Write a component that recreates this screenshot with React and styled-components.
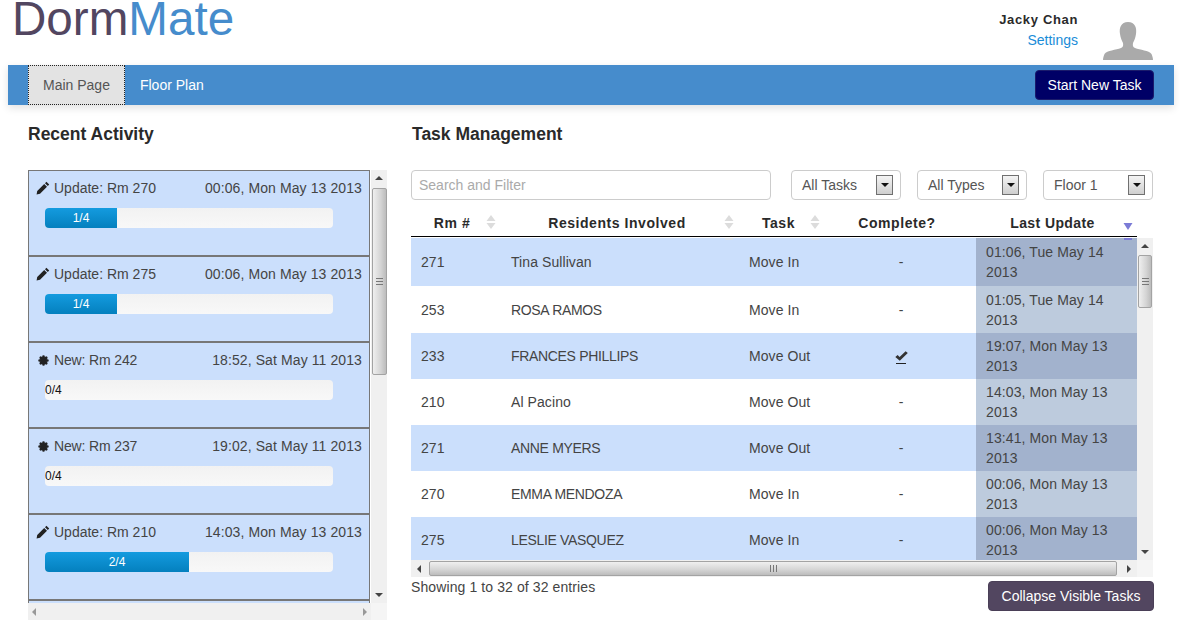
import React from "react";
import styled, { createGlobalStyle } from "styled-components";

const Global = createGlobalStyle`
  html, body { margin: 0; padding: 0; background: #fff; }
  body { font-family: "Liberation Sans", Arial, sans-serif; font-size: 14px; color: #333; }
  * { box-sizing: border-box; }
`;

const Page = styled.div`
  width: 1180px;
  height: 629px;
  overflow: hidden;
`;

const Header = styled.header`
  height: 65px;
  padding: 0 27px 0 12px;
  display: flex;
  justify-content: space-between;
`;

const Logo = styled.h1`
  margin: 0;
  font-size: 47.6px;
  line-height: 38px;
  font-weight: 400;
  color: #524660;
  height: 38px;
`;

const LogoAccent = styled.span`
  color: #468ccc;
`;

const User = styled.div`
  display: flex;
  gap: 25px;
`;

const UserText = styled.div`
  display: flex;
  flex-direction: column;
  align-items: flex-end;
  padding-top: 10px;
  line-height: 20px;
`;

const UserName = styled.strong`
  font-size: 13px;
  letter-spacing: 0.65px;
  color: #2a2a2a;
`;

const SettingsLink = styled.a`
  color: #1a8cd8;
`;

const Avatar = styled.svg`
  width: 50px;
  height: 38px;
  margin-top: 22px;
`;

const Nav = styled.nav`
  width: 1166px;
  height: 40px;
  margin-left: 8px;
  padding: 0 20px;
  display: flex;
  align-items: center;
  background: #468ccc;
  box-shadow: 0 3px 8px rgba(0, 0, 0, 0.12);
`;

const Tab = styled.a`
  height: 40px;
  padding: 0 15px;
  display: flex;
  align-items: center;
  color: ${(p) => (p.$active ? "#555" : "#fff")};
  background: ${(p) => (p.$active ? "#e3e3e3" : "transparent")};
  outline: ${(p) => (p.$active ? "1px dotted #222" : "none")};
  outline-offset: -1px;
`;

const PrimaryButton = styled.button`
  margin-left: auto;
  width: 119px;
  height: 30px;
  padding: 0;
  border: 1px solid #1b1b6b;
  border-radius: 4px;
  background: #000066;
  color: #fff;
  font: 14px "Liberation Sans", Arial, sans-serif;
`;

const Main = styled.main`
  padding: 0 26px 0 28px;
  display: grid;
  grid-template-columns: 359px 742px;
  column-gap: 25px;
`;

const Heading = styled.h2`
  margin: 0;
  height: 65px;
  padding-top: 19px;
  font-size: 17.5px;
  line-height: 20px;
  font-weight: 700;
  color: #2a2a2a;
`;

const LeftFrame = styled.div`
  display: grid;
  grid-template-columns: 343px 16px;
  grid-template-rows: 433px 17px;
  width: 359px;
  background: #f0f0f0;
`;

const ActivityList = styled.div`
  height: 433px;
  overflow: hidden;
  background: #fff;
`;

const ActivityCard = styled.div`
  width: 342px;
  height: 86px;
  border: 1px solid #777;
  background: #cbdffc;
  padding: 7px 7px 0 7px;
`;

const ActivityTop = styled.div`
  display: flex;
  justify-content: space-between;
  line-height: 20px;
  color: #444;
`;

const ActivityLabel = styled.span`
  display: flex;
  align-items: center;
  gap: 4px;
  letter-spacing: ${(p) => (p.$tight ? "-0.15px" : "0")};
`;

const ActivityTime = styled.span`
  letter-spacing: 0.1px;
`;

const Progress = styled.div`
  position: relative;
  width: 288px;
  height: 20px;
  margin: 10px 0 0 9px;
  background: linear-gradient(#f2f2f2, #f8f8f8);
  border-radius: 4px;
  overflow: hidden;
  font-size: 12px;
  line-height: 20px;
`;

const ProgressFill = styled.div`
  height: 100%;
  background: linear-gradient(#149bdf, #0480be);
  color: #fff;
  text-align: center;
`;

const ProgressEmpty = styled.span`
  color: #111;
`;

const VTrack = styled.div`
  display: flex;
  flex-direction: column;
  align-items: center;
  background: #f0f0f0;
  height: ${(p) => p.$h}px;
`;

const VThumb = styled.div`
  width: ${(p) => p.$w}px;
  height: ${(p) => p.$h}px;
  flex: none;
  margin-top: ${(p) => p.$top}px;
  border: 1px solid #a3a3a3;
  border-radius: 2px;
  background: linear-gradient(90deg, #efefef, #d4d4d4 60%, #bcbcbc);
  display: flex;
  align-items: center;
  justify-content: center;
`;

const Grip = styled.div`
  width: 7px;
  height: 7px;
  background: repeating-linear-gradient(#777 0 1px, transparent 1px 3px);
`;

const GripH = styled(Grip)`
  background: repeating-linear-gradient(90deg, #777 0 1px, transparent 1px 3px);
`;

const ArrowBtn = styled.div`
  flex: none;
  width: 0;
  height: 0;
  border-style: solid;
  border-color: transparent;
  border-width: ${(p) =>
    p.$d === "up"
      ? "0 4px 4px"
      : p.$d === "down"
        ? "4px 4px 0"
        : p.$d === "left"
          ? "4px 4px 4px 0"
          : "4px 0 4px 4px"};
  ${(p) => p.$d === "up" && "border-bottom-color: #444;"}
  ${(p) => p.$d === "down" && "border-top-color: #444;"}
  ${(p) => p.$d === "right" && `border-left-color: ${p.$soft ? "#999" : "#444"};`}
  ${(p) => p.$d === "left" && `border-right-color: ${p.$soft ? "#999" : "#444"};`}
`;

const Spacer = styled.div`
  flex: 1;
`;

const HTrack = styled.div`
  display: flex;
  align-items: center;
  height: 17px;
  padding: 0 ${(p) => p.$pad || 4}px;
  background: #f0f0f0;
`;

const HThumb = styled.div`
  flex: none;
  height: 15px;
  width: ${(p) => p.$w}px;
  margin-left: ${(p) => p.$left}px;
  border: 1px solid #a3a3a3;
  border-radius: 2px;
  background: linear-gradient(#efefef, #d4d4d4 60%, #bcbcbc);
  display: flex;
  align-items: center;
  justify-content: center;
`;

const Corner = styled.div`
  background: #f5f5f5;
`;

const Toolbar = styled.div`
  display: flex;
  gap: 16px;
  height: 30px;
  margin-left: -1px;
  width: 742px;
`;

const SearchInput = styled.input`
  width: 360px;
  height: 30px;
  margin-right: 4px;
  padding: 0 7px;
  border: 1px solid #ccc;
  border-radius: 4px;
  font: 14px "Liberation Sans", Arial, sans-serif;
  outline: none;
  &::placeholder { color: #aaa; opacity: 1; }
`;

const FakeSelect = styled.div`
  width: 110px;
  height: 30px;
  display: flex;
  align-items: center;
  justify-content: space-between;
  padding: 0 7px 0 10px;
  border: 1px solid #ccc;
  border-radius: 4px;
  color: #555;
`;

const SelectArrow = styled.span`
  width: 17px;
  height: 20px;
  display: flex;
  align-items: center;
  justify-content: center;
  border: 1px solid #707070;
  background: linear-gradient(#f4f4f4, #cfcfcf);
`;

const Caret = styled.span`
  width: 0;
  height: 0;
  border-style: solid;
  border-width: 4px 4px 0;
  border-color: #111 transparent transparent;
`;

const TableWrap = styled.div`
  margin-left: -1px;
  width: 742px;
`;

const columns = "90px 238px 101px 136px 161px";

const HeadRow = styled.div`
  display: grid;
  grid-template-columns: ${columns};
  width: 726px;
  height: 28px;
  margin-top: 9px;
  border-bottom: 1px solid #000;
`;

const HeadCell = styled.div`
  position: relative;
  text-align: center;
  font-weight: 700;
  font-size: 14px;
  letter-spacing: ${(p) => p.$spacing ?? 0.55}px;
  line-height: 28px;
  color: #2a2a2a;
  padding-right: ${(p) => p.$pr || 0}px;
`;

const SortIcon = styled.svg`
  position: absolute;
  right: ${(p) => p.$right}px;
  top: ${(p) => p.$top}px;
  width: 10px;
  height: 16px;
`;

const SortStub = styled.span`
  position: absolute;
  right: ${(p) => p.$right}px;
  bottom: -3px;
  width: 8px;
  height: 2px;
  background: ${(p) => p.$color};
`;

const TableBody = styled.div`
  display: grid;
  grid-template-columns: 726px 16px;
  grid-template-rows: 322px 17px;
  margin-top: 1px;
`;

const Rows = styled.div`
  height: 322px;
  overflow: hidden;
`;

const Row = styled.div`
  display: grid;
  grid-template-columns: ${columns};
  height: ${(p) => p.$h}px;
  background: ${(p) => (p.$odd ? "#cbdffc" : "#fff")};
  color: #444;
`;

const Cell = styled.div`
  display: flex;
  align-items: center;
  padding: 0 10px;
  letter-spacing: ${(p) => (p.$caps ? "-0.33px" : "0.08px")};
`;

const CompleteCell = styled(Cell)`
  justify-content: center;
  padding: 0 24px 0 10px;
`;

const DateCell = styled.div`
  display: flex;
  align-items: center;
  padding: 0 10px;
  line-height: 20px;
  letter-spacing: 0.1px;
  background: ${(p) => (p.$odd ? "#a2b2cd" : "#bdcbdd")};
`;

const CheckMark = styled.span`
  display: inline-flex;
  flex-direction: column;
  align-items: center;
  gap: 2px;
  padding-top: 2px;
  &::after {
    content: "";
    width: 10px;
    height: 1px;
    background: #222;
  }
`;

const Footer = styled.div`
  display: flex;
  justify-content: space-between;
  width: 743px;
`;

const FooterText = styled.div`
  line-height: 20px;
  color: #444;
  letter-spacing: 0.1px;
`;

const DarkButton = styled.button`
  width: 166px;
  height: 30px;
  margin-top: 4px;
  padding: 0;
  border: 1px solid #4a3f57;
  border-radius: 4px;
  background: #524660;
  color: #fff;
  font: 14px "Liberation Sans", Arial, sans-serif;
`;

const StarSvg = styled.svg`
  width: 11px;
  height: 11px;
  margin: 0 1px 0 2px;
`;

const Pencil = () => (
  <svg width="14" height="14" viewBox="0 0 14 14">
    <path d="M10.4 0.8 L13.2 3.6 L11.8 5 L9 2.2 Z M8.2 3 L11 5.8 L4 12.8 L0.6 13.4 L1.2 10 Z" fill="#222" />
  </svg>
);

const Star = () => (
  <StarSvg viewBox="0 0 14 14">
    <g stroke="#222" strokeWidth="3.4" strokeLinecap="round">
      <path d="M7 2 V12 M2 7 H12 M3.5 3.5 L10.5 10.5 M10.5 3.5 L3.5 10.5" />
    </g>
  </StarSvg>
);

const Check = () => (
  <svg width="13" height="10" viewBox="0 0 13 10">
    <path d="M0.3 6 L2.6 4 L4.6 6 L10.6 0.3 L12.8 2 L4.8 9.8 Z" fill="#333" />
  </svg>
);

const SortBoth = ({ right }) => (
  <>
    <SortIcon $right={right} $top={5} viewBox="0 0 10 16">
      <path d="M5 1 L9.5 7 H0.5 Z M5 15 L9.5 9 H0.5 Z" fill="#dcdcdc" />
    </SortIcon>
    <SortStub $right={right + 1} $color="#d8e0ea" />
  </>
);

const SortDown = () => (
  <>
    <SortIcon $right={4} $top={12} viewBox="0 0 10 16">
      <path d="M0.5 2 H9.5 L5 9 Z" fill="#7b7bd6" />
    </SortIcon>
    <SortStub $right={5} $color="#7b7bd6" />
  </>
);

const activities = [
  { kind: "u", room: 270, time: "00:06, Mon May 13 2013", done: 1 },
  { kind: "u", room: 275, time: "00:06, Mon May 13 2013", done: 1 },
  { kind: "n", room: 242, time: "18:52, Sat May 11 2013", done: 0 },
  { kind: "n", room: 237, time: "19:02, Sat May 11 2013", done: 0 },
  { kind: "u", room: 210, time: "14:03, Mon May 13 2013", done: 2 },
];

const tasks = [
  [271, "Tina Sullivan", "Move In", false, "01:06, Tue May 14 2013", 48],
  [253, "ROSA RAMOS", "Move In", false, "01:05, Tue May 14 2013", 47],
  [233, "FRANCES PHILLIPS", "Move Out", true, "19:07, Mon May 13 2013", 46],
  [210, "Al Pacino", "Move Out", false, "14:03, Mon May 13 2013", 46],
  [271, "ANNE MYERS", "Move Out", false, "13:41, Mon May 13 2013", 46],
  [270, "EMMA MENDOZA", "Move In", false, "00:06, Mon May 13 2013", 46],
  [275, "LESLIE VASQUEZ", "Move In", false, "00:06, Mon May 13 2013", 46],
];

export default function App() {
  return (
    <Page>
      <Global />
      <Header>
        <Logo>
          Dorm<LogoAccent>Mate</LogoAccent>
        </Logo>
        <User>
          <UserText>
            <UserName>Jacky Chan</UserName>
            <SettingsLink>Settings</SettingsLink>
          </UserText>
          <Avatar viewBox="0 0 50 38">
            <path
              d="M25 0 C18 0 16 6 17 12 C17.5 16 19 19 20 21 C20.5 24 20 25 18 26 C13 28 4 28.5 1.5 32 C0.7 34 0 36 0 38 H50 C50 36 49.3 34 48.5 32 C46 28.5 37 28 32 26 C30 25 29.5 24 30 21 C31 19 32.5 16 33 12 C34 6 32 0 25 0 Z"
              fill="#aaa"
            />
          </Avatar>
        </User>
      </Header>

      <Nav>
        <Tab $active>Main Page</Tab>
        <Tab>Floor Plan</Tab>
        <PrimaryButton>Start New Task</PrimaryButton>
      </Nav>

      <Main>
        <section>
          <Heading>Recent Activity</Heading>
          <LeftFrame>
            <ActivityList>
              {activities.map((a, i) => (
                <ActivityCard key={i}>
                  <ActivityTop>
                    <ActivityLabel $tight={a.kind === "n"}>
                      {a.kind === "u" ? <Pencil /> : <Star />}
                      {a.kind === "u" ? "Update" : "New"}: Rm {a.room}
                    </ActivityLabel>
                    <ActivityTime>{a.time}</ActivityTime>
                  </ActivityTop>
                  <Progress>
                    {a.done > 0 ? (
                      <ProgressFill style={{ width: `${(a.done / 4) * 100}%` }}>
                        {a.done}/4
                      </ProgressFill>
                    ) : (
                      <ProgressEmpty>0/4</ProgressEmpty>
                    )}
                  </Progress>
                </ActivityCard>
              ))}
              <ActivityCard />
            </ActivityList>
            <VTrack $h={433}>
              <ArrowBtn $d="up" style={{ marginTop: 6 }} />
              <VThumb $w={15} $h={187} $top={8}>
                <Grip />
              </VThumb>
              <Spacer />
              <ArrowBtn $d="down" style={{ marginBottom: 6 }} />
            </VTrack>
            <HTrack>
              <ArrowBtn $d="left" $soft />
              <Spacer />
              <ArrowBtn $d="right" $soft />
            </HTrack>
            <Corner />
          </LeftFrame>
        </section>

        <section>
          <Heading>Task Management</Heading>
          <Toolbar>
            <SearchInput placeholder="Search and Filter" />
            {["All Tasks", "All Types", "Floor 1"].map((s) => (
              <FakeSelect key={s}>
                {s}
                <SelectArrow>
                  <Caret />
                </SelectArrow>
              </FakeSelect>
            ))}
          </Toolbar>
          <TableWrap>
            <HeadRow>
              <HeadCell $pr={8}>
                Rm #<SortBoth right={5} />
              </HeadCell>
              <HeadCell $pr={6}>
                Residents Involved<SortBoth right={5} />
              </HeadCell>
              <HeadCell $pr={22}>
                Task<SortBoth right={20} />
              </HeadCell>
              <HeadCell $pr={22}>Complete?</HeadCell>
              <HeadCell $pr={8} $spacing={0.4}>
                Last Update<SortDown />
              </HeadCell>
            </HeadRow>
            <TableBody>
              <Rows>
                {tasks.map((t, i) => (
                  <Row key={i} $odd={i % 2 === 0} $h={t[5]}>
                    <Cell>{t[0]}</Cell>
                    <Cell $caps={t[1] === t[1].toUpperCase()}>{t[1]}</Cell>
                    <Cell>{t[2]}</Cell>
                    <CompleteCell>
                      {t[3] ? (
                        <CheckMark>
                          <Check />
                        </CheckMark>
                      ) : (
                        "-"
                      )}
                    </CompleteCell>
                    <DateCell $odd={i % 2 === 0}>{t[4]}</DateCell>
                  </Row>
                ))}
              </Rows>
              <VTrack $h={322}>
                <ArrowBtn $d="up" style={{ marginTop: 6 }} />
                <VThumb $w={14} $h={53} $top={7}>
                  <Grip />
                </VThumb>
                <Spacer />
                <ArrowBtn $d="down" style={{ marginBottom: 6 }} />
              </VTrack>
              <HTrack $pad={6}>
                <ArrowBtn $d="left" />
                <HThumb $w={688} $left={8}>
                  <GripH />
                </HThumb>
                <Spacer />
                <ArrowBtn $d="right" />
              </HTrack>
              <Corner />
            </TableBody>
            <Footer>
              <FooterText>Showing 1 to 32 of 32 entries</FooterText>
              <DarkButton>Collapse Visible Tasks</DarkButton>
            </Footer>
          </TableWrap>
        </section>
      </Main>
    </Page>
  );
}
